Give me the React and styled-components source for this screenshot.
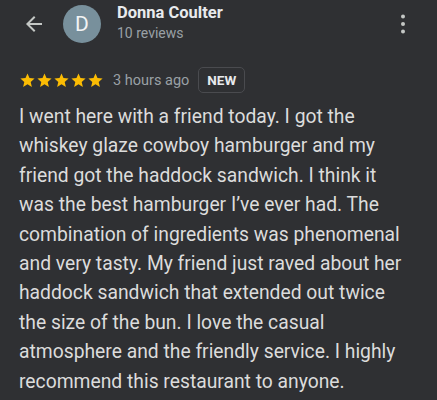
import styled, { createGlobalStyle } from "styled-components";

const Global = createGlobalStyle`
  html, body {
    margin: 0;
    background: #2f3033;
  }
  body {
    font-family: Roboto, "Noto Sans", sans-serif;
  }
`;

const Page = styled.div`
  width: 437px;
  height: 400px;
  overflow: hidden;
  background: #2f3033;
  color: #e3e3e3;
`;

const Header = styled.div`
  display: flex;
  align-items: center;
  height: 48px;
  padding: 0 22px 0 22px;
`;

const IconButton = styled.button`
  display: flex;
  align-items: center;
  justify-content: center;
  background: none;
  border: none;
  padding: 0;
  width: 24px;
  height: 24px;
`;

const Avatar = styled.div`
  width: 38px;
  height: 38px;
  border-radius: 50%;
  background: #78909c;
  color: #f1f3f4;
  display: flex;
  align-items: center;
  justify-content: center;
  font-size: 21px;
  margin-left: 17px;
  flex-shrink: 0;
`;

const Who = styled.div`
  flex: 1;
  margin-left: 16px;
  display: flex;
  flex-direction: column;
`;

const Name = styled.div`
  font-size: 16.5px;
  font-weight: 700;
  color: #e8eaed;
  line-height: 20px;
  margin-top: -3px;
`;

const Sub = styled.div`
  font-size: 14px;
  color: #9aa0a6;
  line-height: 20px;
`;

const Meta = styled.div`
  display: flex;
  align-items: center;
  margin-top: 19px;
  padding-left: 19px;
`;

const Stars = styled.div`
  display: flex;
`;

const Ago = styled.span`
  font-size: 14.5px;
  color: #9aa0a6;
  margin-left: 9px;
`;

const Badge = styled.span`
  margin-left: 9px;
  border: 1px solid #4a4b4f;
  border-radius: 5px;
  padding: 0 8px;
  height: 24px;
  display: flex;
  align-items: center;
  font-size: 13.5px;
  font-weight: 700;
  color: #e8eaed;
`;

const Body = styled.p`
  margin: 9px 0 0;
  padding: 0 27px 0 19px;
  font-size: 19.3px;
  line-height: 29.4px;
  color: #dcdcdc;
`;

function Star() {
  return (
    <svg width="17" height="17" viewBox="0 0 24 24">
      <path
        fill="#fbbc04"
        d="M12 17.27L18.18 21l-1.64-7.03L22 9.24l-7.19-.61L12 2 9.19 8.63 2 9.24l5.46 4.73L5.82 21z"
      />
    </svg>
  );
}

export default function App() {
  return (
    <>
      <Global />
      <Page>
        <Header>
          <IconButton>
            <svg width="24" height="24" viewBox="0 0 24 24">
              <path fill="#c4c7c5" d="M20 11H7.83l5.59-5.59L12 4l-8 8 8 8 1.41-1.41L7.83 13H20v-2z" />
            </svg>
          </IconButton>
          <Avatar>D</Avatar>
          <Who>
            <Name>Donna Coulter</Name>
            <Sub>10 reviews</Sub>
          </Who>
          <IconButton>
            <svg width="24" height="24" viewBox="0 0 24 24">
              <circle cx="12" cy="4.5" r="2" fill="#c4c7c5" />
              <circle cx="12" cy="12" r="2" fill="#c4c7c5" />
              <circle cx="12" cy="19.5" r="2" fill="#c4c7c5" />
            </svg>
          </IconButton>
        </Header>
        <Meta>
          <Stars>
            {[0, 1, 2, 3, 4].map((i) => (
              <Star key={i} />
            ))}
          </Stars>
          <Ago>3 hours ago</Ago>
          <Badge>NEW</Badge>
        </Meta>
        <Body>
          I went here with a friend today. I got the whiskey glaze cowboy
          hamburger and my friend got the haddock sandwich. I think it was the
          best hamburger I’ve ever had. The combination of ingredients was
          phenomenal and very tasty. My friend just raved about her haddock
          sandwich that extended out twice the size of the bun. I love the
          casual atmosphere and the friendly service. I highly recommend this
          restaurant to anyone.
        </Body>
      </Page>
    </>
  );
}
